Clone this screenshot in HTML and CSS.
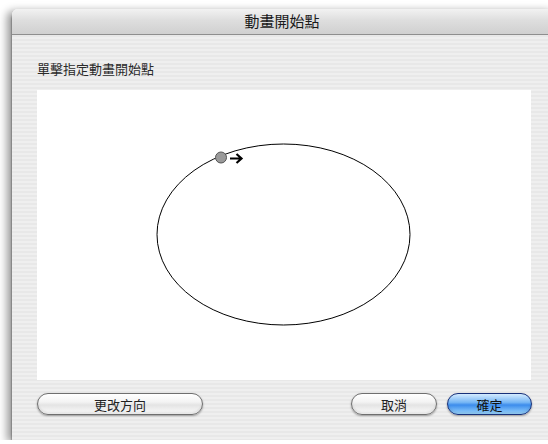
FILE: index.html
```html
<!DOCTYPE html>
<html lang="zh-Hant">
<head>
  <meta charset="UTF-8" />
  <title>動畫開始點</title>
  <link rel="stylesheet" href="styles.css">
</head>
<body>
  <div class="window">
    <div class="titlebar">動畫開始點</div>
    <div class="content">
      <div class="label">單擊指定動畫開始點</div>
      <div class="canvas">
        <svg width="494" height="290" viewBox="0 0 494 290">
          <!-- motion path -->
          <ellipse cx="246.5" cy="144.5" rx="126.5" ry="90.5" fill="none" stroke="#000" stroke-width="1" />
          <!-- start point + direction -->
          <circle cx="184" cy="67.5" r="5.5" fill="#9a9a9a" stroke="#555" stroke-width="1" />
          <path d="M193 68.5 H204 M199.5 64 L204.5 68.5 L199.5 73" fill="none" stroke="#000" stroke-width="2.2" />
        </svg>
      </div>
      <div class="buttons">
        <button class="btn wide">更改方向</button>
        <div class="spacer"></div>
        <button class="btn">取消</button>
        <button class="btn default">確定</button>
      </div>
    </div>
  </div>
</body>
</html>
```

FILE: styles.css
```css
body { margin: 0; background: #fff; overflow: hidden; font-family: "Liberation Sans", "Noto Sans CJK TC", sans-serif; }
.window {
  margin: 9px 0 0 12px; width: 546px; height: 431px;
  border-radius: 6px 6px 0 0;
  background: repeating-linear-gradient(to bottom, #efefef 0, #efefef 2px, #e8e8e8 2px, #e8e8e8 4px);
  box-shadow: -5px 2px 8px rgba(0,0,0,0.4), 0 4px 2px rgba(0,0,0,0.7);
  display: flex; flex-direction: column;
}
.titlebar {
  height: 25px; border-bottom: 1px solid #8e8e8e;
  border-radius: 6px 6px 0 0;
  background: linear-gradient(to bottom, #f2f2f2 0%, #dedede 45%, #d0d0d0 100%);
  text-align: center; font-size: 15px; line-height: 26px; color: #1a1a1a;
  padding-right: 6px;
}
.content { padding: 0 0 0 25px; }
.label { font-size: 13px; color: #2a2a2a; margin: 25px 0 0 0; height: 19px; line-height: 19px; }
.canvas { width: 494px; height: 290px; background: #fff; margin-top: 11px; }
.canvas svg { display: block; }
.buttons { display: flex; align-items: center; width: 495px; margin-top: 13px; }
.spacer { flex: 1; }
.btn {
  height: 22px; font-family: "Liberation Sans", "Noto Sans CJK TC", sans-serif; font-size: 13px; color: #222;
  border: 1px solid #6f6f6f; border-radius: 11px; padding: 0;
  background: linear-gradient(to bottom, #ffffff 0%, #f3f3f3 40%, #e4e4e4 55%, #fbfbfb 100%);
  box-shadow: 0 1px 2px rgba(0,0,0,0.35), inset 0 -2px 2px rgba(0,0,0,0.08);
  width: 86px; margin-left: 10px;
}
.btn.wide { width: 166px; margin-left: 0; }
.btn.default {
  width: 85px; border-color: #17307a; color: #111;
  background: linear-gradient(to bottom, #d4ebff 0%, #76b6f5 42%, #3c8cec 55%, #9ad6ff 100%);
}
```
